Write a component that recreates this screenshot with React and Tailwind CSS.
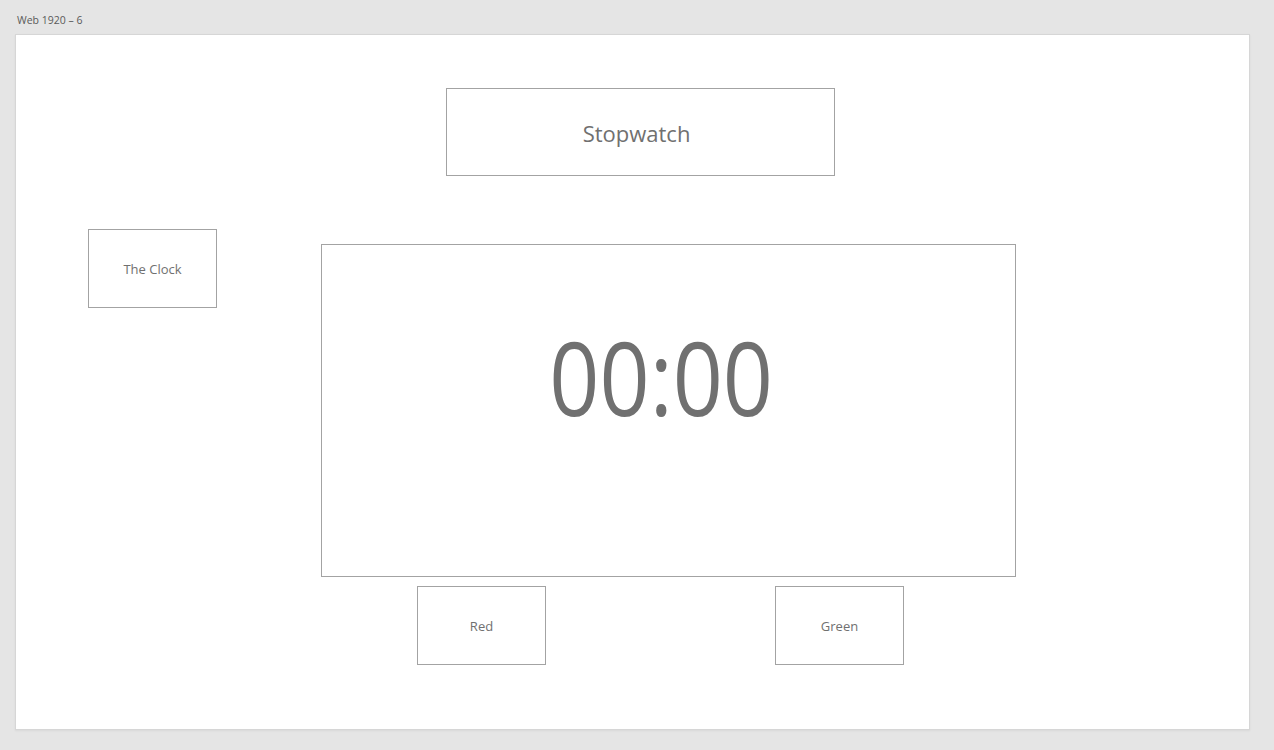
export default function App() {
  return (
    <div
      className="min-h-[750px] w-full bg-[#e5e5e5] text-[#707070]"
      style={{ fontFamily: '"Open Sans", "Noto Sans", sans-serif' }}
    >
      <div className="h-[35px] pl-[17px] pt-[15px] text-[10.5px] leading-none text-[#5a5a5a]">
        Web 1920 – 6
      </div>

      <div className="ml-[15px] -mt-px h-[696px] w-[1235px] border border-[#d6d6d6] bg-white pt-[53px] shadow-[0_1px_2px_rgba(0,0,0,0.06)]">
        <div className="ml-[430px] flex h-[88px] w-[389px] items-center justify-center border border-[#a3a3a3] pr-[8px] pt-[3px] text-[22px]">
          Stopwatch
        </div>

        <div className="mt-[53px] flex items-start">
          <div className="ml-[72px] flex h-[79px] w-[129px] items-center justify-center border border-[#a3a3a3] pt-[3px] text-[13px]">
            The Clock
          </div>

          <div className="ml-[104px] mt-[15px] flex h-[333px] w-[695px] justify-center border border-[#a3a3a3] pt-[81px]">
            <span className="inline-block pr-[16px] text-[102px] leading-none scale-x-[0.86]">
              00:00
            </span>
          </div>
        </div>

        <div className="mt-[9px] flex">
          <div className="ml-[401px] flex h-[79px] w-[129px] items-center justify-center border border-[#a3a3a3] pt-[3px] text-[13px]">
            Red
          </div>
          <div className="ml-[229px] flex h-[79px] w-[129px] items-center justify-center border border-[#a3a3a3] pt-[3px] text-[13px]">
            Green
          </div>
        </div>
      </div>
    </div>
  );
}
